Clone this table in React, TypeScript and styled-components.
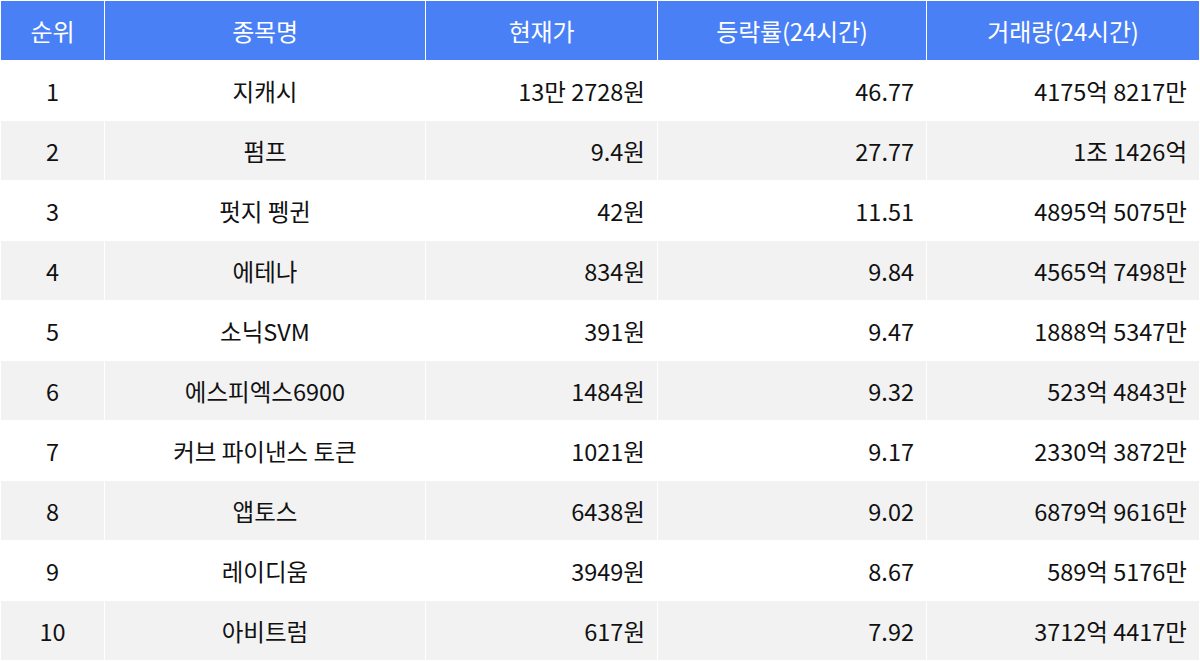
import styled, { createGlobalStyle } from "styled-components";

interface Coin {
    rank: number;
    name: string;
    price: string;
    change: string;
    volume: string;
}

const coins: Coin[] = [
    { rank: 1, name: "지캐시", price: "13만 2728원", change: "46.77", volume: "4175억 8217만" },
    { rank: 2, name: "펌프", price: "9.4원", change: "27.77", volume: "1조 1426억" },
    { rank: 3, name: "펏지 펭귄", price: "42원", change: "11.51", volume: "4895억 5075만" },
    { rank: 4, name: "에테나", price: "834원", change: "9.84", volume: "4565억 7498만" },
    { rank: 5, name: "소닉SVM", price: "391원", change: "9.47", volume: "1888억 5347만" },
    { rank: 6, name: "에스피엑스6900", price: "1484원", change: "9.32", volume: "523억 4843만" },
    { rank: 7, name: "커브 파이낸스 토큰", price: "1021원", change: "9.17", volume: "2330억 3872만" },
    { rank: 8, name: "앱토스", price: "6438원", change: "9.02", volume: "6879억 9616만" },
    { rank: 9, name: "레이디움", price: "3949원", change: "8.67", volume: "589억 5176만" },
    { rank: 10, name: "아비트럼", price: "617원", change: "7.92", volume: "3712억 4417만" },
];

const GlobalStyle = createGlobalStyle`
    body {
        margin: 0;
        background: #ffffff;
        font-family: "Noto Sans CJK KR", "Noto Sans", sans-serif;
    }
`;

export default function App() {
    return (
        <>
            <GlobalStyle />
            <Table>
                <colgroup>
                    <col style={{ width: 103 }} />
                    <col style={{ width: 320 }} />
                    <col style={{ width: 231 }} />
                    <col style={{ width: 268 }} />
                    <col style={{ width: 272 }} />
                </colgroup>
                <thead>
                    <tr>
                        <HeadCell>순위</HeadCell>
                        <HeadCell>종목명</HeadCell>
                        <HeadCell>현재가</HeadCell>
                        <HeadCell>등락률(24시간)</HeadCell>
                        <HeadCell>거래량(24시간)</HeadCell>
                    </tr>
                </thead>
                <tbody>
                    {coins.map((coin) => (
                        <Row key={coin.rank} striped={coin.rank % 2 === 0}>
                            <Cell align="center">{coin.rank}</Cell>
                            <Cell align="center">{coin.name}</Cell>
                            <Cell align="right">{coin.price}</Cell>
                            <Cell align="right">{coin.change}</Cell>
                            <Cell align="right">{coin.volume}</Cell>
                        </Row>
                    ))}
                </tbody>
            </Table>
        </>
    );
}

const Table = styled.table`
    width: 1200px;
    table-layout: fixed;
    border-collapse: separate;
    border-spacing: 1px;
    background: #ffffff;
`;

const HeadCell = styled.th`
    height: 59px;
    padding: 0;
    background: #4a80f6;
    color: #ffffff;
    font-size: 24px;
    font-weight: 400;
    letter-spacing: -0.2px;
    text-align: center;
    vertical-align: middle;
`;

const Row = styled.tr<{ striped: boolean }>`
    background: ${({ striped }) => (striped ? "#f2f2f2" : "#ffffff")};
`;

const Cell = styled.td<{ align: "center" | "right" }>`
    height: 59px;
    padding: 0 12px;
    color: #111111;
    font-size: 23.5px;
    font-weight: 400;
    text-align: ${({ align }) => align};
    vertical-align: middle;
    white-space: nowrap;
`;
